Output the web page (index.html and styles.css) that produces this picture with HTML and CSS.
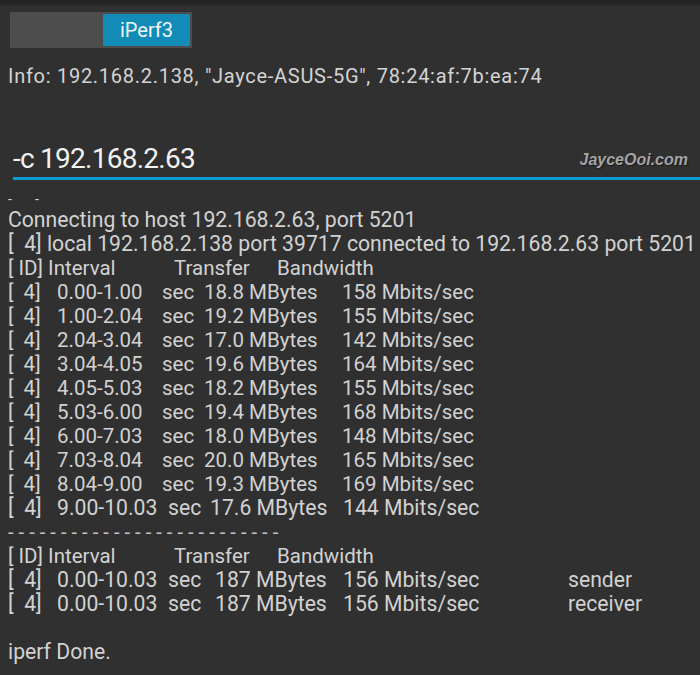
FILE: index.html
```html
<!DOCTYPE html>
<html>
<head>
<meta charset="utf-8">
<link rel="stylesheet" href="styles.css">
</head>
<body>
<div class="app">
  <div class="topbar"></div>
  <div class="toolbar">
    <div class="seg">
      <div class="seg-empty"></div>
      <div class="seg-btn">iPerf3</div>
    </div>
  </div>
  <div class="info">Info: 192.168.2.138, "Jayce-ASUS-5G", 78:24:af:7b:ea:74</div>
  <div class="input-row">
    <div class="input-text">-c 192.168.2.63</div>
    <div class="watermark">JayceOoi.com</div>
  </div>
  <div class="output">
    <div class="line tiny"><span class="d1">-</span><span>-</span></div>
    <div class="line cond">Connecting to host 192.168.2.63, port 5201</div>
    <div class="line cond">[&nbsp; 4] local 192.168.2.138 port 39717 connected to 192.168.2.63 port 5201</div>
    <div class="line"><span class="h-id">[ ID] Interval</span><span class="h-tr">Transfer</span><span>Bandwidth</span></div>
    <div class="line row"><span class="c-id">[&nbsp; 4]</span><span class="c-int">0.00-1.00</span><span class="c-sec">sec</span><span class="c-tr">18.8 MBytes</span><span>158 Mbits/sec</span></div>
    <div class="line row"><span class="c-id">[&nbsp; 4]</span><span class="c-int">1.00-2.04</span><span class="c-sec">sec</span><span class="c-tr">19.2 MBytes</span><span>155 Mbits/sec</span></div>
    <div class="line row"><span class="c-id">[&nbsp; 4]</span><span class="c-int">2.04-3.04</span><span class="c-sec">sec</span><span class="c-tr">17.0 MBytes</span><span>142 Mbits/sec</span></div>
    <div class="line row"><span class="c-id">[&nbsp; 4]</span><span class="c-int">3.04-4.05</span><span class="c-sec">sec</span><span class="c-tr">19.6 MBytes</span><span>164 Mbits/sec</span></div>
    <div class="line row"><span class="c-id">[&nbsp; 4]</span><span class="c-int">4.05-5.03</span><span class="c-sec">sec</span><span class="c-tr">18.2 MBytes</span><span>155 Mbits/sec</span></div>
    <div class="line row"><span class="c-id">[&nbsp; 4]</span><span class="c-int">5.03-6.00</span><span class="c-sec">sec</span><span class="c-tr">19.4 MBytes</span><span>168 Mbits/sec</span></div>
    <div class="line row"><span class="c-id">[&nbsp; 4]</span><span class="c-int">6.00-7.03</span><span class="c-sec">sec</span><span class="c-tr">18.0 MBytes</span><span>148 Mbits/sec</span></div>
    <div class="line row"><span class="c-id">[&nbsp; 4]</span><span class="c-int">7.03-8.04</span><span class="c-sec">sec</span><span class="c-tr">20.0 MBytes</span><span>165 Mbits/sec</span></div>
    <div class="line row"><span class="c-id">[&nbsp; 4]</span><span class="c-int">8.04-9.00</span><span class="c-sec">sec</span><span class="c-tr">19.3 MBytes</span><span>169 Mbits/sec</span></div>
    <div class="line row cond"><span class="c-id">[&nbsp; 4]</span><span class="c-int2">9.00-10.03</span><span class="c-sec2">sec</span><span class="c-tr2">17.6 MBytes</span><span>144 Mbits/sec</span></div>
    <div class="line dashes">- - - - - - - - - - - - - - - - - - - - - - - - - -</div>
    <div class="line"><span class="h-id">[ ID] Interval</span><span class="h-tr">Transfer</span><span>Bandwidth</span></div>
    <div class="line row cond"><span class="c-id">[&nbsp; 4]</span><span class="c-int2">0.00-10.03</span><span class="c-sec3">sec</span><span class="c-tr3">187 MBytes</span><span class="c-bw3">156 Mbits/sec</span><span>sender</span></div>
    <div class="line row cond"><span class="c-id">[&nbsp; 4]</span><span class="c-int2">0.00-10.03</span><span class="c-sec3">sec</span><span class="c-tr3">187 MBytes</span><span class="c-bw3">156 Mbits/sec</span><span>receiver</span></div>
    <div class="line"></div>
    <div class="line cond">iperf Done.</div>
  </div>
</div>
</body>
</html>
```

FILE: styles.css
```css
html, body {
  margin: 0;
  padding: 0;
  background: #303030;
}
body {
  width: 700px;
  height: 675px;
  overflow: hidden;
  font-family: Roboto, "Noto Sans", sans-serif;
  color: #d2d2d2;
}
.app {
  display: flex;
  flex-direction: column;
}
.topbar {
  height: 6px;
  background: linear-gradient(#222222, #2b2b2b);
}
.toolbar {
  padding: 6px 0 0 10px;
  height: 36px;
}
.seg {
  display: flex;
  width: 182px;
  height: 36px;
  background: #4d4d4d;
  box-sizing: border-box;
  padding: 2px 2px 2px 0;
}
.seg-empty {
  width: 93px;
}
.seg-btn {
  flex: 1;
  background: #138bb7;
  color: #eef6fa;
  font-size: 20px;
  display: flex;
  align-items: center;
  justify-content: center;
  border-radius: 1px;
}
.info {
  margin-top: 16px;
  padding-left: 8px;
  font-size: 20px;
  letter-spacing: 0.72px;
  line-height: 24px;
  color: #d4d4d4;
}
.input-row {
  margin-top: 52px;
  margin-left: 13px;
  height: 40px;
  border-bottom: 3px solid #0e9ad3;
  display: flex;
  align-items: center;
  justify-content: space-between;
  box-sizing: border-box;
}
.input-text {
  font-size: 28px;
  letter-spacing: -0.75px;
  color: #f2f2f2;
}
.watermark {
  font-family: "Liberation Sans", Arial, sans-serif;
  font-weight: bold;
  font-style: italic;
  font-size: 16px;
  color: #a4a4a4;
  text-shadow: 1px 1px 1px #1a1a1a;
  padding-right: 12px;
  padding-top: 2px;
}
.output {
  padding-left: 8px;
}
.line {
  height: 24px;
  line-height: 24px;
  font-size: 20.5px;
  white-space: pre;
  display: flex;
}
.cond {
  font-size: 21.2px;
}
.tiny {
  font-size: 14px;
  height: 28px;
  line-height: 14px;
  align-items: flex-end;
  box-sizing: border-box;
}
.tiny span {
  transform: translateY(-2px);
}
.d1 {
  width: 27px;
}
.h-id { width: 166px; }
.h-tr { width: 103px; }
.c-id { width: 49px; }
.c-int { width: 105px; }
.c-sec { width: 42px; }
.c-tr { width: 138px; }
.c-int2 { width: 111px; }
.c-sec2 { width: 42px; }
.c-tr2 { width: 133px; }
.c-sec3 { width: 47px; }
.c-tr3 { width: 128px; }
.c-bw3 { width: 225px; }
.dashes {
  font-size: 20px;
  letter-spacing: 0.05px;
  color: #c4c4c4;
}
```
